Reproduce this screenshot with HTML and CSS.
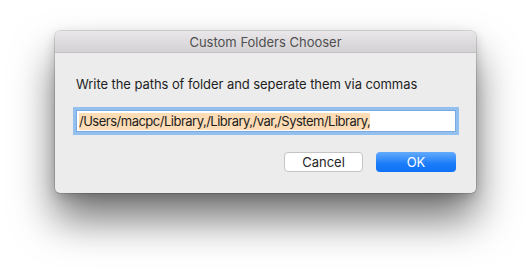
FILE: index.html
```html
<!DOCTYPE html>
<html>
<head>
<meta charset="utf-8">
<link rel="stylesheet" href="styles.css">
</head>
<body>
<div class="stage">
  <div class="window">
    <div class="titlebar">Custom Folders Chooser</div>
    <div class="content">
      <div class="label">Write the paths of folder and seperate them via commas</div>
      <div class="field"><span class="sel">/Users/macpc/Library,/Library,/var,/System/Library,</span></div>
      <div class="buttons">
        <div class="btn cancel">Cancel</div>
        <div class="btn ok">OK</div>
      </div>
    </div>
  </div>
</div>
</body>
</html>
```

FILE: styles.css
```css
html, body {
  margin: 0;
  padding: 0;
  background: #ffffff;
}
.stage {
  width: 532px;
  height: 273px;
  padding: 31px 0 0 55px;
  box-sizing: border-box;
  font-family: "Inter", "Liberation Sans", sans-serif;
  font-size: 13px;
}
.window {
  width: 421px;
  height: 162px;
  border-radius: 5px;
  background: #ececec;
  overflow: hidden;
  box-shadow: 0 0 0 0.5px rgba(0,0,0,0.25), 0 26px 42px rgba(0,0,0,0.55), 0 4px 12px rgba(0,0,0,0.18);
  display: flex;
  flex-direction: column;
}
.titlebar {
  height: 21px;
  line-height: 22px;
  text-align: center;
  color: #4f4f4f;
  background: linear-gradient(#e9e7e9, #d3d1d3);
  border-bottom: 1px solid #c2c0c2;
  flex: none;
}
.content {
  padding: 23px 20px 0 21px;
  display: flex;
  flex-direction: column;
}
.label {
  color: #1e1e1e;
  line-height: 16px;
  letter-spacing: -0.07px;
}
.field {
  margin-top: 18px;
  height: 22px;
  box-sizing: border-box;
  width: 380px;
  background: #ffffff;
  border: 1px solid #7aa9e2;
  box-shadow: 0 0 0 3px #94c0f0;
  display: flex;
  align-items: center;
  padding-left: 2px;
}
.sel {
  background: #fddcb6;
  color: #1c1c1c;
  line-height: 17px;
  letter-spacing: -0.5px;
}
.buttons {
  display: flex;
  justify-content: flex-end;
  gap: 13px;
  margin-top: 20px;
}
.btn {
  width: 79px;
  height: 20px;
  box-sizing: border-box;
  border-radius: 4px;
  text-align: center;
  line-height: 20px;
}
.cancel {
  background: #ffffff;
  border: 1px solid #c4c4c4;
  line-height: 18px;
  color: #262626;
}
.ok {
  width: 80px;
  background: linear-gradient(#64abfc, #1a7cf9 60%, #0f71f6);
  color: #ffffff;
}
```
